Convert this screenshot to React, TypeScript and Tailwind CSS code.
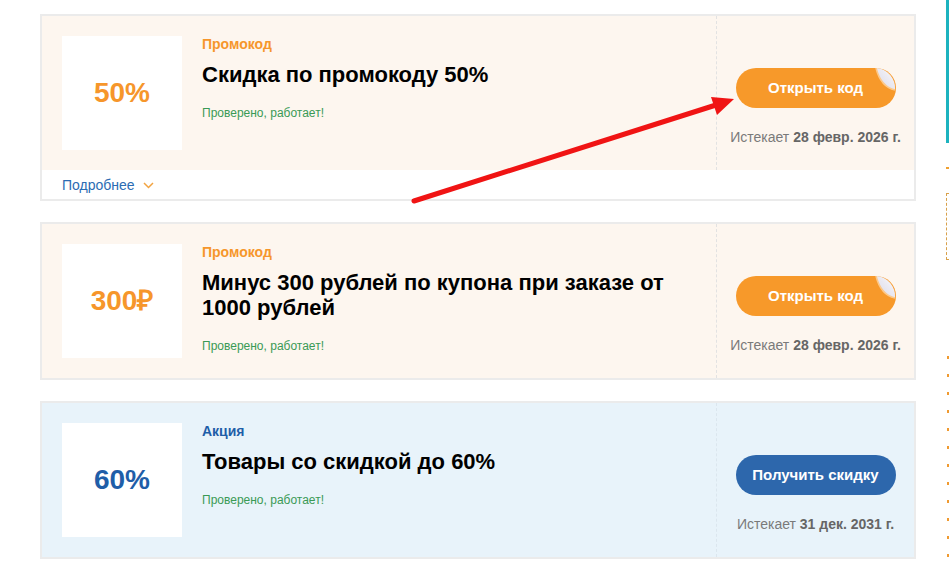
import React from "react";

type Coupon = {
  value: string;
  kind: "promo" | "sale";
  label: string;
  title: string;
  button: string;
  expiryPrefix: string;
  expiryDate: string;
  more?: boolean;
};

const coupons: Coupon[] = [
  {
    value: "50%",
    kind: "promo",
    label: "Промокод",
    title: "Скидка по промокоду 50%",
    button: "Открыть код",
    expiryPrefix: "Истекает ",
    expiryDate: "28 февр. 2026 г.",
    more: true,
  },
  {
    value: "300₽",
    kind: "promo",
    label: "Промокод",
    title: "Минус 300 рублей по купона при заказе от 1000 рублей",
    button: "Открыть код",
    expiryPrefix: "Истекает ",
    expiryDate: "28 февр. 2026 г.",
  },
  {
    value: "60%",
    kind: "sale",
    label: "Акция",
    title: "Товары со скидкой до 60%",
    button: "Получить скидку",
    expiryPrefix: "Истекает ",
    expiryDate: "31 дек. 2031 г.",
  },
];

function Peel() {
  return (
    <svg
      className="absolute top-0 right-0 w-[22px] h-[24px]"
      viewBox="0 0 22 24"
      aria-hidden="true"
    >
      <defs>
        <linearGradient id="peelg" x1="0" y1="1" x2="1" y2="0">
          <stop offset="0" stopColor="#d9d8e6" />
          <stop offset="0.6" stopColor="#ecebf3" />
          <stop offset="1" stopColor="#ffffff" />
        </linearGradient>
      </defs>
      <path d="M2,0 A20,20 0 0 1 21,22 C12,20 5,12 2,0 Z" fill="url(#peelg)" />
      <path d="M2,0 C5,12 12,20 21,22" fill="none" stroke="#fdc98a" strokeWidth="1.6" />
    </svg>
  );
}

function CouponCard({ c }: { c: Coupon }) {
  const promo = c.kind === "promo";
  return (
    <div className="border-2 border-[#ebebeb] bg-white">
      <div className={`flex ${promo ? "bg-[#fdf6ef]" : "bg-[#e8f3fa]"}`}>
        <div className="flex flex-1 gap-[20px] p-[20px]">
          <div className="w-[120px] h-[114px] shrink-0 bg-white flex items-center justify-center">
            <span
              className={`text-[28px] font-bold leading-none ${
                promo ? "text-[#f6962b]" : "text-[#1f5ea8]"
              }`}
            >
              {c.value}
            </span>
          </div>
          <div className="flex flex-col pr-[30px]">
            <div
              className={`text-[14px] leading-[16px] font-bold ${
                promo ? "text-[#f6962b]" : "text-[#1f5ea8]"
              }`}
            >
              {c.label}
            </div>
            <div className="mt-[10px] text-[22px] leading-[25px] font-bold text-black">
              {c.title}
            </div>
            <div className="mt-[18px] text-[12px] leading-[16px] text-[#3a9a55]">
              Проверено, работает!
            </div>
          </div>
        </div>
        <div
          className={`w-[198px] shrink-0 border-l border-dashed ${
            promo ? "border-[#e2e2e2]" : "border-[#dbe6ee]"
          } flex flex-col items-center pt-[52px]`}
        >
          <div
            className={`relative w-[160px] h-[40px] rounded-full flex items-center justify-center text-white text-[15px] font-bold ${
              promo ? "bg-[#f7992a]" : "bg-[#2d67ac]"
            }`}
          >
            {c.button}
            {promo && <Peel />}
          </div>
          <div className="mt-[21px] text-[14px] leading-[16px] text-[#7a7a7a] whitespace-nowrap">
            {c.expiryPrefix}
            <span className="font-bold text-[#666666]">{c.expiryDate}</span>
          </div>
        </div>
      </div>
      {c.more && (
        <div className="h-[29px] pl-[20px] pt-[2px] flex items-center gap-[8px] text-[14px] text-[#2b6cb3]">
          <span>Подробнее</span>
          <svg width="11" height="7" viewBox="0 0 11 7" aria-hidden="true">
            <polyline points="1,1 5.5,5.5 10,1" fill="none" stroke="#f2a341" strokeWidth="1.5" />
          </svg>
        </div>
      )}
    </div>
  );
}

export default function App() {
  const dots = Array.from({ length: 12 });
  return (
    <div className="relative w-[949px] h-[571px] overflow-hidden bg-white font-['Liberation_Sans',Arial,sans-serif]">
      <div className="flex items-start">
        <div className="ml-[40px] mt-[14px] w-[876px] shrink-0 flex flex-col gap-[21px]">
          {coupons.map((c, i) => (
            <CouponCard key={i} c={c} />
          ))}
        </div>
        <div className="ml-[30px] w-[200px] shrink-0 flex flex-col">
          <div className="h-[143px] border-l-[3px] border-[#1db3bf]" />
          <div className="mt-[24px] w-[3px] h-[2px] bg-[#f0a030]" />
          <div className="mt-[24px] h-[67px] border border-dashed border-[#d9a14a]" />
          <div className="mt-[96px] flex flex-col gap-[15px] pl-[1px]">
            {dots.map((_, i) => (
              <div key={i} className="w-[2px] h-[3px] bg-[#f09a30]" />
            ))}
          </div>
        </div>
      </div>
      <svg
        className="absolute inset-0 pointer-events-none"
        width="949"
        height="571"
        viewBox="0 0 949 571"
        aria-hidden="true"
      >
        <line x1="414" y1="201" x2="716" y2="105" stroke="#f01414" strokeWidth="5" strokeLinecap="round" />
        <polygon points="734,99 711,97 717,115" fill="#f01414" />
      </svg>
    </div>
  );
}
